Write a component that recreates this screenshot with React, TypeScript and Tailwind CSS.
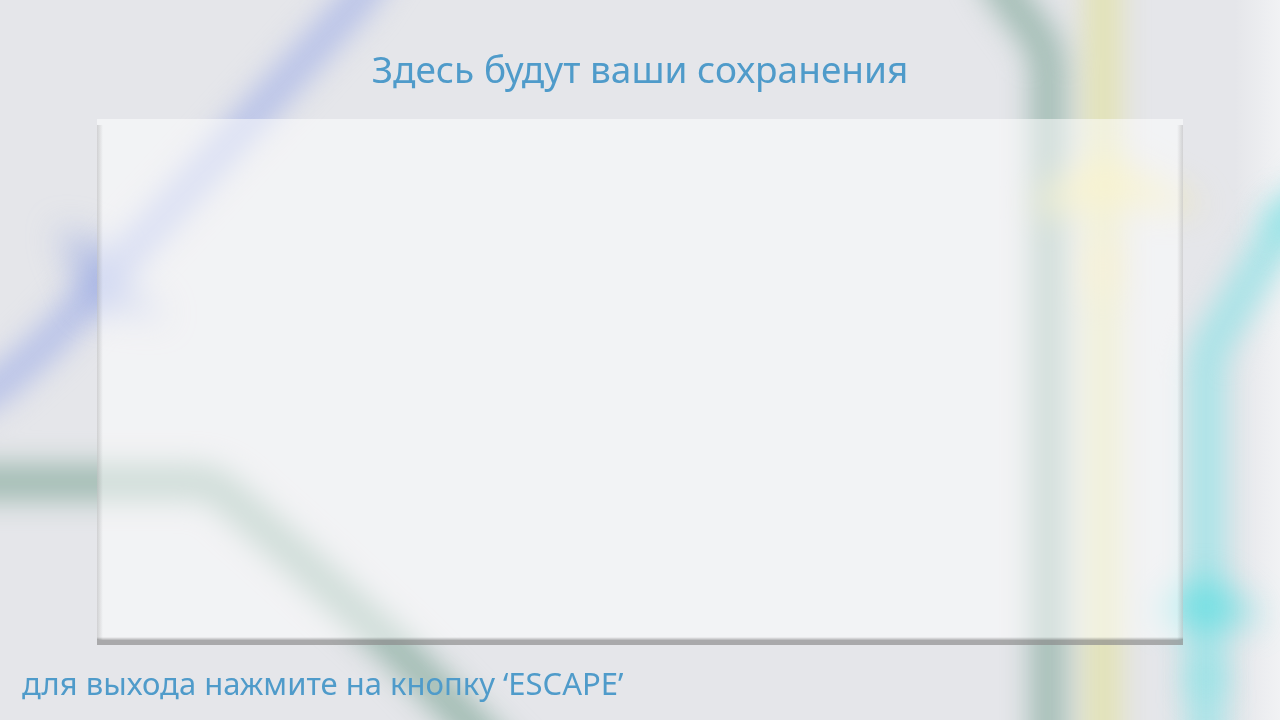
function TransitMap() {
  return (
    <svg
      aria-hidden="true"
      viewBox="0 0 1280 720"
      preserveAspectRatio="xMidYMid slice"
      className="absolute inset-0 -z-10 h-full w-full"
    >
      <defs>
        <filter id="soft" filterUnits="userSpaceOnUse" x="-100" y="-100" width="1480" height="920" colorInterpolationFilters="sRGB">
          <feGaussianBlur stdDeviation="14" />
        </filter>
        <filter id="softer" filterUnits="userSpaceOnUse" x="-100" y="-100" width="1480" height="920" colorInterpolationFilters="sRGB">
          <feGaussianBlur stdDeviation="17" />
        </filter>
        <linearGradient id="edge" x1="0" x2="1" y1="0" y2="0">
          <stop offset="0" stopColor="#f1f2f4" stopOpacity="0" />
          <stop offset="1" stopColor="#f1f2f4" />
        </linearGradient>
      </defs>
      <rect x="-100" y="-100" width="1480" height="920" fill="#e5e6ea" />
      <rect x="1235" y="0" width="45" height="720" fill="url(#edge)" />
      <g filter="url(#soft)" fill="none" strokeWidth="36">
        <path d="M398 -60 L358 0 L102 284 L45 345 L0 385 L-60 420" stroke="#b8c2e8" strokeWidth="34" />
        <path d="M-80 482 H195 Q212 482 228 496 L300 560 L400 652 L484 738 L545 800" stroke="#a0bbb2" />
        <path d="M976 -60 L1006 -6 L1036 34 Q1048 50 1048 76 V800" stroke="#a3bdb5" />
        <path d="M1103 -80 V800" stroke="#e2e2b3" />
        <path d="M1330 174 L1280 230 L1222 328 Q1206 350 1206 376 V800" stroke="#a9e3e7" strokeWidth="38" />
      </g>
      <g filter="url(#softer)">
        <path d="M58 228 L108 248 L112 272 L168 318 L118 312 L90 306 Z" fill="#9dade3" opacity="0.7" />
        <path d="M1035 196 L1105 155 L1205 208 L1105 208 L1040 215 Z" fill="#f3e79a" opacity="0.75" />
        <path d="M1103 240 V296" stroke="#f1e2b0" strokeWidth="22" />
        <path d="M1155 614 L1190 582 L1218 582 L1262 618 L1205 632 Z" fill="#50dde1" opacity="0.65" />
        <path d="M1206 662 V692" stroke="#8de1e4" strokeWidth="26" />
        <circle cx="1288" cy="222" r="18" fill="#8ee5e7" />
      </g>
    </svg>
  );
}

export default function App() {
  return (
    <main className="relative isolate flex min-h-screen flex-col overflow-hidden bg-[#e5e6ea] font-['Noto_Sans','Open_Sans',sans-serif] text-[#4f9bca]">
      <TransitMap />
      <header className="px-6 pt-10 pb-[22px] text-center">
        <h1 className="text-[37px] leading-[57px]">Здесь будут ваши сохранения</h1>
      </header>
      <section
        aria-label="Сохранения"
        className="mx-[97px] flex flex-1 flex-col border-b-[5px] border-black/30 bg-white/50 pt-1.5"
      >
        <div className="flex-1 bg-[linear-gradient(to_right,rgb(0_0_0/0.14),transparent_6px),linear-gradient(to_left,rgb(0_0_0/0.14),transparent_6px),linear-gradient(to_top,rgb(0_0_0/0.25),transparent_3px)]" />
      </section>
      <footer className="px-[22px] pt-4 pb-3.5">
        <p className="flex flex-wrap gap-x-2 text-[31px] leading-[45px]">
          <span>для выхода нажмите на кнопку</span>
          <span>‘ESCAPE’</span>
        </p>
      </footer>
    </main>
  );
}
